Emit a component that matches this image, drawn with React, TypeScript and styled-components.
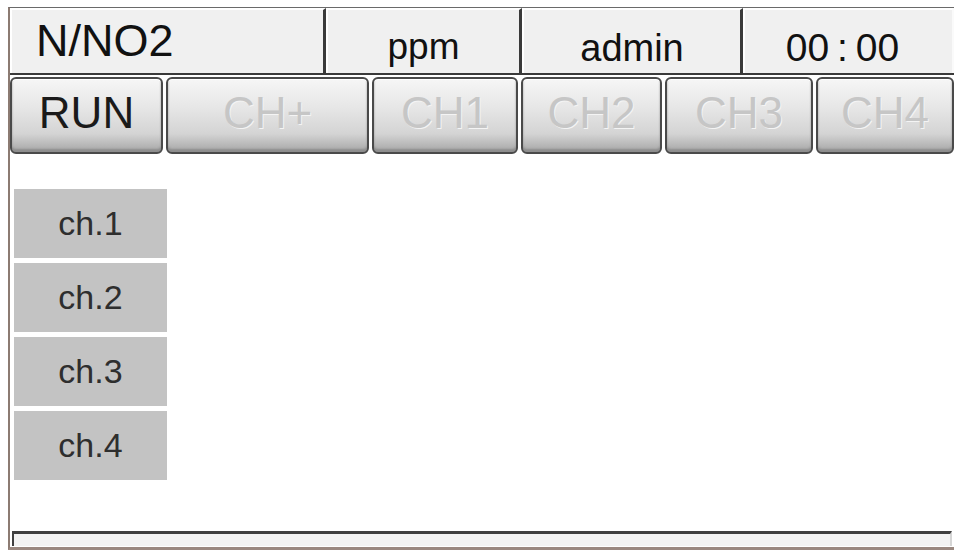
import styled, { createGlobalStyle } from 'styled-components';

const GlobalStyle = createGlobalStyle`
    html, body {
        margin: 0;
        padding: 0;
        background: #ffffff;
        overflow: hidden;
    }
    body {
        font-family: "Liberation Sans", Arial, sans-serif;
    }
`

const Screen = styled.div`
    width: 954px;
    height: 550px;
    padding: 7px 0 0 8px;
    box-sizing: border-box;
    background: #ffffff;
`

const Frame = styled.div`
    height: 100%;
    display: flex;
    flex-direction: column;
    border-left: 2px solid #8c7b72;
    border-top: 1px solid #6a6a6a;
    border-bottom: 3px solid #9a8880;
    box-sizing: border-box;
`

const StatusBar = styled.div`
    display: grid;
    grid-template-columns: 316px 196px 221px 1fr;
    height: 67px;
    border-bottom: 2px solid #3a3a3a;
    box-sizing: border-box;
`

interface StatusCellProps {
    align?: 'left' | 'center';
    size: number;
    drop: number;
    last?: boolean;
}

const StatusCell = styled.div<StatusCellProps>`
    display: flex;
    align-items: flex-start;
    justify-content: ${props => props.align === 'left' ? 'flex-start' : 'center'};
    padding-top: ${props => props.drop}px;
    padding-left: ${props => props.align === 'left' ? '24px' : '0'};
    padding-right: ${props => props.last ? '12px' : '0'};
    background: #f0f0f0;
    border-top: 2px solid #ffffff;
    border-left: 2px solid #ffffff;
    border-right: ${props => props.last ? '2px solid #fafafa' : '3px solid #3a3a3a'};
    box-sizing: border-box;
    font-size: ${props => props.size}px;
    color: #111111;
    line-height: 1;
    white-space: nowrap;
    word-spacing: -3px;
`

const ButtonRow = styled.div`
    display: grid;
    grid-template-columns: 153px 203px 146px 141px 148px 1fr;
    gap: 3px;
    height: 82px;
    padding: 2px 0 3px 0;
    box-sizing: border-box;
    overflow: hidden;
`

interface ModeButtonProps {
    disabled?: boolean;
}

const ModeButton = styled.div<ModeButtonProps>`
    display: flex;
    align-items: center;
    justify-content: center;
    padding-bottom: 5px;
    border: 2px solid #4a4a4a;
    border-radius: 6px;
    background: linear-gradient(#f6f6f6 0%, #e6e6e6 40%, #d4d4d4 75%, #a6a6a6 100%);
    box-shadow: inset 0 1px 0 #ffffff, inset 0 -3px 2px #8e8e8e;
    box-sizing: border-box;
    font-size: 44px;
    line-height: 1;
    color: ${props => props.disabled ? '#c6c6c6' : '#1a1a1a'};
    text-shadow: ${props => props.disabled ? '1px 1px 0 #f4f4f4' : 'none'};
    white-space: nowrap;
`

const Workspace = styled.div`
    flex: 1;
    padding: 32px 0 0 4px;
`

const ChannelList = styled.div`
    display: flex;
    flex-direction: column;
    gap: 5px;
    width: 153px;
`

const ChannelItem = styled.div`
    height: 69px;
    display: flex;
    align-items: center;
    justify-content: center;
    background: #c3c3c3;
    color: #2e2e2e;
    font-size: 34px;
`

const ProgressTrack = styled.div`
    height: 15px;
    margin: 0 2px 1px 2px;
    background: #f3f3f3;
    border-top: 3px solid #404040;
    border-left: 2px solid #404040;
    border-right: 2px solid #d6d6d6;
    box-sizing: border-box;
`

const channels = ['ch.1', 'ch.2', 'ch.3', 'ch.4'];

export default function App() {
    return (
        <>
            <GlobalStyle />
            <Screen>
                <Frame>
                    <StatusBar>
                        <StatusCell align="left" size={45} drop={8}>N/NO2</StatusCell>
                        <StatusCell size={37} drop={18}>ppm</StatusCell>
                        <StatusCell size={38} drop={19}>admin</StatusCell>
                        <StatusCell size={39} drop={18} last>00 : 00</StatusCell>
                    </StatusBar>
                    <ButtonRow>
                        <ModeButton>RUN</ModeButton>
                        <ModeButton disabled>CH+</ModeButton>
                        <ModeButton disabled>CH1</ModeButton>
                        <ModeButton disabled>CH2</ModeButton>
                        <ModeButton disabled>CH3</ModeButton>
                        <ModeButton disabled>CH4</ModeButton>
                    </ButtonRow>
                    <Workspace>
                        <ChannelList>
                            {channels.map(ch => (
                                <ChannelItem key={ch}>{ch}</ChannelItem>
                            ))}
                        </ChannelList>
                    </Workspace>
                    <ProgressTrack />
                </Frame>
            </Screen>
        </>
    );
}
